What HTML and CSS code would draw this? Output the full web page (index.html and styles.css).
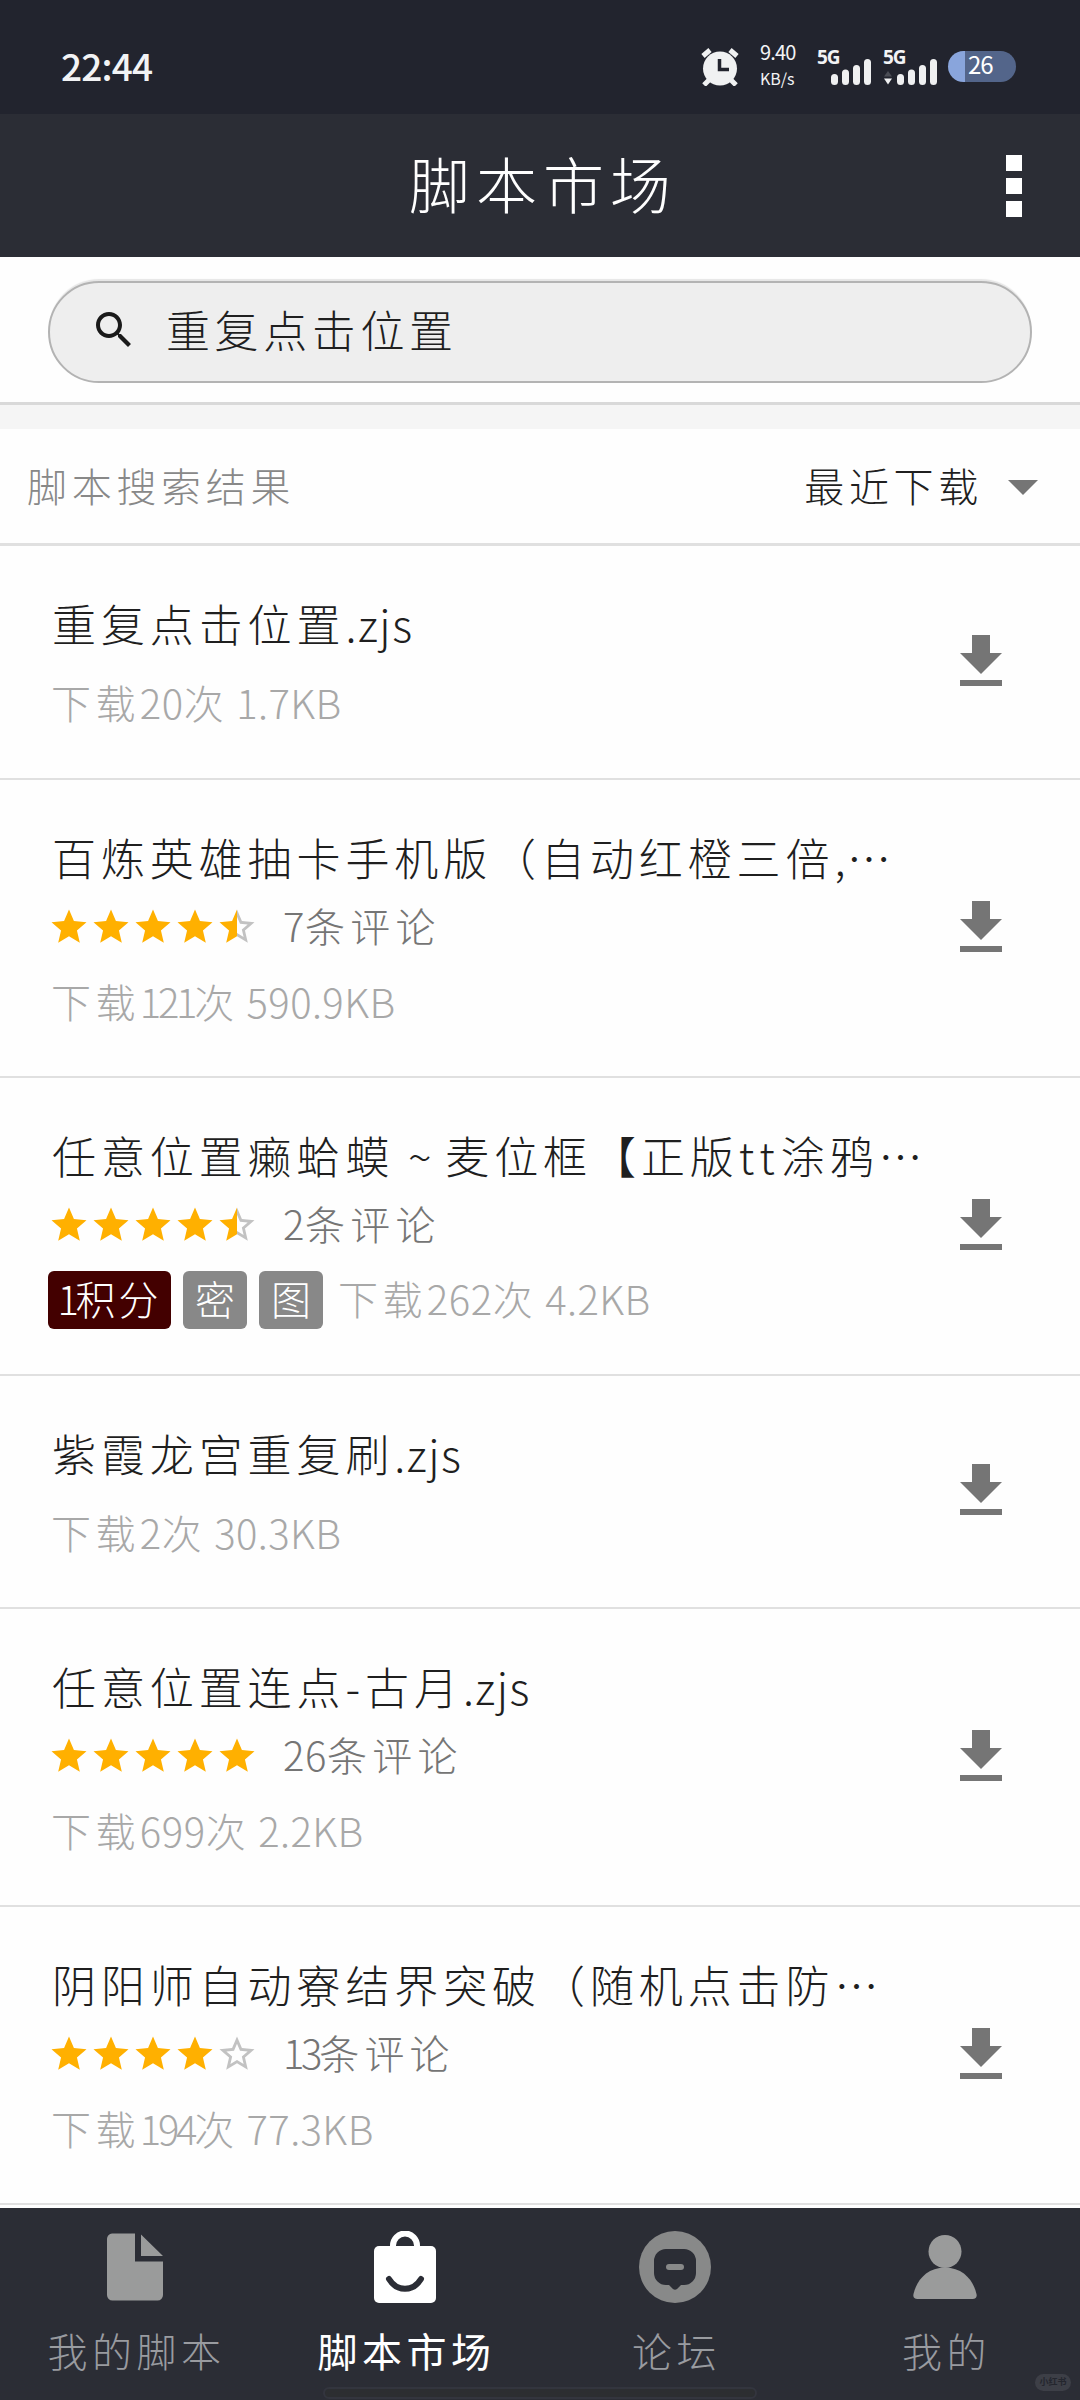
FILE: index.html
```html
<!DOCTYPE html>
<html lang="zh-CN">
<head>
<meta charset="utf-8">
<title>脚本市场</title>
<link rel="stylesheet" href="styles.css">
</head>
<body>
<svg class="defs" aria-hidden="true">
  <symbol id="star" viewBox="0 0 24 24"><path fill="#ffb000" d="M12 17.27L18.18 21l-1.64-7.03L22 9.24l-7.19-.61L12 2 9.19 8.63 2 9.24l5.46 4.73L5.82 21z"/></symbol>
  <symbol id="star-empty" viewBox="0 0 24 24"><path fill="#c2c2c2" d="M22 9.24l-7.19-.62L12 2 9.19 8.63 2 9.24l5.46 4.73L5.82 21 12 17.27 18.18 21l-1.63-7.03L22 9.24zM12 15.4l-3.76 2.27 1-4.28-3.32-2.88 4.38-.38L12 6.1l1.71 4.04 4.38.38-3.32 2.88 1 4.28L12 15.4z"/></symbol>
  <symbol id="star-half" viewBox="0 0 24 24"><path fill="#c2c2c2" d="M22 9.24l-7.19-.62L12 2v4.1l1.71 4.04 4.38.38-3.32 2.88 1 4.28L12 15.4v1.87L18.18 21l-1.63-7.03L22 9.24z"/><path fill="#ffb000" d="M12 2L9.19 8.63 2 9.24l5.46 4.73L5.82 21 12 17.27z"/></symbol>
  <symbol id="download" viewBox="0 0 24 24"><path fill="#757575" d="M19 9h-4V3H9v6H5l7 7 7-7zM5 18v2h14v-2H5z"/></symbol>
</svg>
<div class="app">
  <div class="status">
    <span class="clock">22:44</span>
    <svg class="alarm" viewBox="0 0 38 38"><circle cx="19" cy="20.500" r="17"/><path class="ears" d="M2 8l7-6M36 8l-7-6M8 32l-5 5M30 32l5 5"/><path class="hands" d="M18.500 11v10.500h9.500"/></svg>
    <span class="speed"><span>9.40</span><span>KB/s</span></span>
    <span class="signal"><b>5G</b><svg viewBox="0 0 56 38"><path d="M17.500 29.500v4M28.500 25v8.500M39.500 20.500v13M50.500 14.500v19"/></svg></span>
    <span class="signal"><b>5G</b><svg viewBox="0 0 56 38"><path d="M17.500 29.500v4M28.500 25v8.500M39.500 20.500v13M50.500 14.500v19"/><path class="up" d="M1 28.500l4-5.500 4 5.500z"/><path class="down" d="M1 30.500l4 6 4-6z"/></svg></span>
    <span class="battery">26</span>
  </div>
  <header class="header">
    <h1>脚本市场</h1>
    <div class="more"><i></i><i></i><i></i></div>
  </header>
  <div class="search-bar">
    <div class="search">
      <svg viewBox="0 0 24 24"><path d="M15.500 14h-.79l-.28-.27C15.410 12.590 16 11.110 16 9.500 16 5.910 13.090 3 9.500 3S3 5.910 3 9.500 5.910 16 9.500 16c1.610 0 3.090-.59 4.230-1.570l.27.28v.79l5 4.990L20.490 19l-4.990-5zm-6 0C7.010 14 5 11.990 5 9.500S7.010 5 9.500 5 14 7.010 14 9.500 11.990 14 9.500 14z"/></svg>
      <span>重复点击位置</span>
    </div>
  </div>
  <div class="band"></div>
  <div class="sort">
    <span class="label">脚本搜索结果</span>
    <span class="order">最近下载</span>
    <svg viewBox="0 0 24 24"><path d="M7 10l5 5 5-5z"/></svg>
  </div>
  <main class="list">
    <article class="item">
      <div class="info">
        <h2>重复点击位置<span class="lat">.zjs</span></h2>
        <p class="meta">下载<span class="num">20</span>次<span class="size">1.7KB</span></p>
      </div>
      <svg class="get"><use href="#download"/></svg>
    </article>
    <article class="item rated">
      <div class="info">
        <h2>百炼英雄抽卡手机版（自动红橙三倍<span class="lat">,</span>…</h2>
        <div class="rating"><svg><use href="#star"/></svg><svg><use href="#star"/></svg><svg><use href="#star"/></svg><svg><use href="#star"/></svg><svg><use href="#star-half"/></svg><span><span class="num">7</span>条评论</span></div>
        <p class="meta">下载<span class="num one">121</span>次<span class="size">590.9KB</span></p>
      </div>
      <svg class="get"><use href="#download"/></svg>
    </article>
    <article class="item rated">
      <div class="info">
        <h2>任意位置癞蛤蟆<span class="tilde">~</span>麦位框【正版<span class="lat tt">tt</span>涂鸦…</h2>
        <div class="rating"><svg><use href="#star"/></svg><svg><use href="#star"/></svg><svg><use href="#star"/></svg><svg><use href="#star"/></svg><svg><use href="#star-half"/></svg><span><span class="num">2</span>条评论</span></div>
        <div class="tagged">
          <span class="tag points"><span class="num one">1</span>积分</span><span class="tag">密</span><span class="tag">图</span>
          <p class="meta">下载<span class="num">262</span>次<span class="size">4.2KB</span></p>
        </div>
      </div>
      <svg class="get"><use href="#download"/></svg>
    </article>
    <article class="item">
      <div class="info">
        <h2>紫霞龙宫重复刷<span class="lat">.zjs</span></h2>
        <p class="meta">下载<span class="num">2</span>次<span class="size">30.3KB</span></p>
      </div>
      <svg class="get"><use href="#download"/></svg>
    </article>
    <article class="item rated">
      <div class="info">
        <h2>任意位置连点<span class="lat dash">-</span>古月<span class="lat">.zjs</span></h2>
        <div class="rating"><svg><use href="#star"/></svg><svg><use href="#star"/></svg><svg><use href="#star"/></svg><svg><use href="#star"/></svg><svg><use href="#star"/></svg><span><span class="num">26</span>条评论</span></div>
        <p class="meta">下载<span class="num">699</span>次<span class="size">2.2KB</span></p>
      </div>
      <svg class="get"><use href="#download"/></svg>
    </article>
    <article class="item rated">
      <div class="info">
        <h2>阴阳师自动寮结界突破（随机点击防…</h2>
        <div class="rating"><svg><use href="#star"/></svg><svg><use href="#star"/></svg><svg><use href="#star"/></svg><svg><use href="#star"/></svg><svg><use href="#star-empty"/></svg><span><span class="num one">13</span>条评论</span></div>
        <p class="meta">下载<span class="num one">194</span>次<span class="size">77.3KB</span></p>
      </div>
      <svg class="get"><use href="#download"/></svg>
    </article>
  </main>
  <nav class="nav">
    <a><svg viewBox="0 0 72 72"><path d="M13 2.500h23v28h28V64a5.500 5.500 0 0 1-5.500 5.500h-45A5.500 5.500 0 0 1 8 64V8a5.500 5.500 0 0 1 5-5.500zM42 3.500l22 21.500H42z"/></svg><span>我的脚本</span></a>
    <a class="active"><svg viewBox="0 0 72 72"><path d="M10 15h52a5 5 0 0 1 5 5v47a5 5 0 0 1-5 5H10a5 5 0 0 1-5-5V20a5 5 0 0 1 5-5z"/><path class="handle" d="M24 16v-1.500a12 12 0 0 1 24 0V16"/><path class="smile" d="M20 48c8 13 24 13 32 0"/></svg><span>脚本市场</span></a>
    <a class="dim"><svg viewBox="0 0 72 72"><circle cx="36" cy="36" r="36"/><path class="hole" d="M27 18h18a12 12 0 0 1 12 12v12a12 12 0 0 1-12 12h-3l-4 4q-2 1.500-4 0l-4-4h-3a12 12 0 0 1-12-12V30a12 12 0 0 1 12-12z"/><rect x="27" y="33" width="18" height="6" rx="3"/></svg><span>论坛</span></a>
    <a><svg viewBox="0 0 72 72"><circle cx="36" cy="20.500" r="16.500"/><path d="M36 36.500c18 0 28.500 13 31.500 26.500q1 5-4 5h-55q-5 0-4-5C7.500 49.500 18 36.500 36 36.500z"/></svg><span>我的</span></a>
    <div class="home"></div>
    <div class="mark">小红书</div>
  </nav>
</div>
</body>
</html>
```
FILE: styles.css
```css
* { box-sizing: border-box; margin: 0; padding: 0; }
body {
  width: 1080px;
  height: 2400px;
  overflow: hidden;
  background: #fefefe;
  color: #1f1f1f;
  font-family: "Noto Sans CJK SC", sans-serif;
  font-weight: 300;
}
svg { display: block; flex: none; }
.defs { position: absolute; width: 0; height: 0; }
.app { display: flex; flex-direction: column; height: 2400px; }

.status {
  display: flex;
  align-items: center;
  height: 114px;
  padding: 20px 64px 0 61px;
  background: #22242e;
  color: #f2f3f5;
}
.clock { width: 640px; margin-top: -5px; font: 500 37px/40px "Noto Sans CJK SC", sans-serif; letter-spacing: -.800px; }
.alarm { width: 38px; height: 38px; fill: #f0f1f2; }
.alarm .ears { fill: none; stroke: #f0f1f2; stroke-width: 5; }
.alarm .hands { fill: none; stroke: #22242e; stroke-width: 3.500; }
.speed { display: flex; flex-direction: column; width: 60px; margin: -4px 0 0 21px; font-size: 20px; font-weight: 400; line-height: 26px; letter-spacing: -.8px; }
.speed span:last-child { font-size: 16px; letter-spacing: 0; }
.signal { position: relative; width: 66px; height: 38px; margin-left: -3px; }
.signal + .signal { margin-left: 0; }
.signal b { position: absolute; left: 0; top: 0; font: 700 19px/19px "Open Sans", sans-serif; letter-spacing: -1px; }
.signal svg { width: 56px; height: 38px; fill: none; stroke: #eff0f1; stroke-width: 7; stroke-linecap: round; }
.signal .up { fill: #4b4d55; stroke: none; }
.signal .down { fill: #eff0f1; stroke: none; }
.battery {
  width: 68px;
  height: 31px;
  margin: -1px 0 0 -1px;
  padding-left: 20px;
  border-radius: 16px;
  background: linear-gradient(90deg, #89a5dc 17px, #53658a 17px);
  color: #fff;
  font-size: 24px;
  font-weight: 400;
  line-height: 26px;
  letter-spacing: -1px;
}

.header { display: flex; align-items: center; height: 143px; padding: 0 58px 0 409px; background: #2b2d35; color: #fff; }
.header h1 { flex: 1; margin-top: -5px; font-size: 61px; font-weight: 300; line-height: 80px; letter-spacing: 6px; }
.more { display: flex; flex-direction: column; gap: 7px; }
.more i { width: 16px; height: 16px; background: #fff; }

.search-bar { height: 148px; padding: 24px 48px 0; border-bottom: 3px solid #d9d9d9; }
.search {
  display: flex;
  align-items: center;
  height: 102px;
  padding-left: 40px;
  border: 2px solid #b3b3b3;
  border-radius: 51px;
  background: #eee;
  box-shadow: 0 -3px 1px -1px #e6e6e6;
  font-size: 44px;
  letter-spacing: 4.600px;
}
.search svg { width: 48px; height: 48px; margin: -4px 28px 0 0; fill: #1a1a1a; }
.search span { line-height: 60px; margin-top: -7px; }
.band { height: 24px; background: #f5f5f5; }
.sort { display: flex; align-items: center; height: 117px; padding: 0 21px 0 27px; border-bottom: 3px solid #e0e0e0; font-size: 40px; letter-spacing: 4.700px; }
.sort span { line-height: 60px; margin-top: -3px; }
.sort .label { flex: 1; color: #888; }
.sort svg { width: 72px; height: 72px; fill: #757575; }
.sort .order { margin-right: 4px; }

.list { height: 1662px; }
.item { display: flex; align-items: center; height: 233.500px; padding: 0 63px 0 48px; border-bottom: 2.500px solid #e0e0e0; }
.item.rated { height: 298px; }
.info { flex: 1; align-self: flex-start; padding-top: 47px; white-space: nowrap; }
.info h2 { padding-left: 4px; font-size: 44px; font-weight: 300; line-height: 60px; letter-spacing: 4.900px; }
.info .lat { letter-spacing: 1.500px; }
.info .tt { letter-spacing: 6px; }
.info .dash { letter-spacing: 5px; }
.info .tilde { display: inline-block; width: 51px; text-align: center; letter-spacing: 0; }
.meta { margin: 20px 0 0 3px; color: #a8a8a8; font-size: 40px; line-height: 58px; letter-spacing: 4.400px; }
.rated .meta { margin-top: 24px; }
.num { letter-spacing: .6px; }
.num.one { letter-spacing: -3.300px; }
.size { margin-left: 8px; letter-spacing: .400px; }
.rating { display: flex; align-items: center; height: 42px; margin-top: 19px; color: #757575; font-size: 40px; letter-spacing: 5.200px; }
.rating svg { width: 42px; height: 42px; }
.rating > span { margin: -4px 0 0 25px; line-height: 42px; }
.tagged { display: flex; align-items: center; gap: 12px; margin-top: 25px; }
.tag { height: 58px; width: 64px; border-radius: 6px; background: #888; color: #fff; font-size: 40px; line-height: 54px; text-align: center; }
.tag.points { width: 123px; background: #430000; letter-spacing: 3px; }
.rated .tagged .meta { margin: -3px 0 0 3px; }
.get { width: 72px; height: 72px; }

.nav { position: relative; display: grid; grid-template-columns: repeat(4, 270px); flex: 1; background: #2b2d35; }
.nav a { display: flex; flex-direction: column; align-items: center; padding-top: 23px; color: #999ba0; fill: #9a9b9b; font-size: 40px; }
.nav svg { width: 72px; height: 72px; }
.nav span { margin-top: 17px; line-height: 60px; letter-spacing: 4.500px; margin-right: -3px; }
.nav .active { color: #fff; fill: #fff; font-weight: 400; }
.nav .dim { fill: #888989; }
.nav .handle { fill: none; stroke: #fff; stroke-width: 6; }
.nav .smile { fill: none; stroke: #2b2d35; stroke-width: 6; stroke-linecap: round; }
.nav .hole { fill: #2b2d35; }
.home { position: absolute; left: 323px; bottom: 1px; width: 434px; height: 12px; border: 2px solid #33353e; border-radius: 6px; background: #2c2e31; }
.mark { position: absolute; left: 1035px; bottom: 9px; width: 36px; height: 17px; border-radius: 9px; background: #3d3f47; color: #24262e; font-size: 9px; font-weight: 700; line-height: 16px; text-align: center; }
```
